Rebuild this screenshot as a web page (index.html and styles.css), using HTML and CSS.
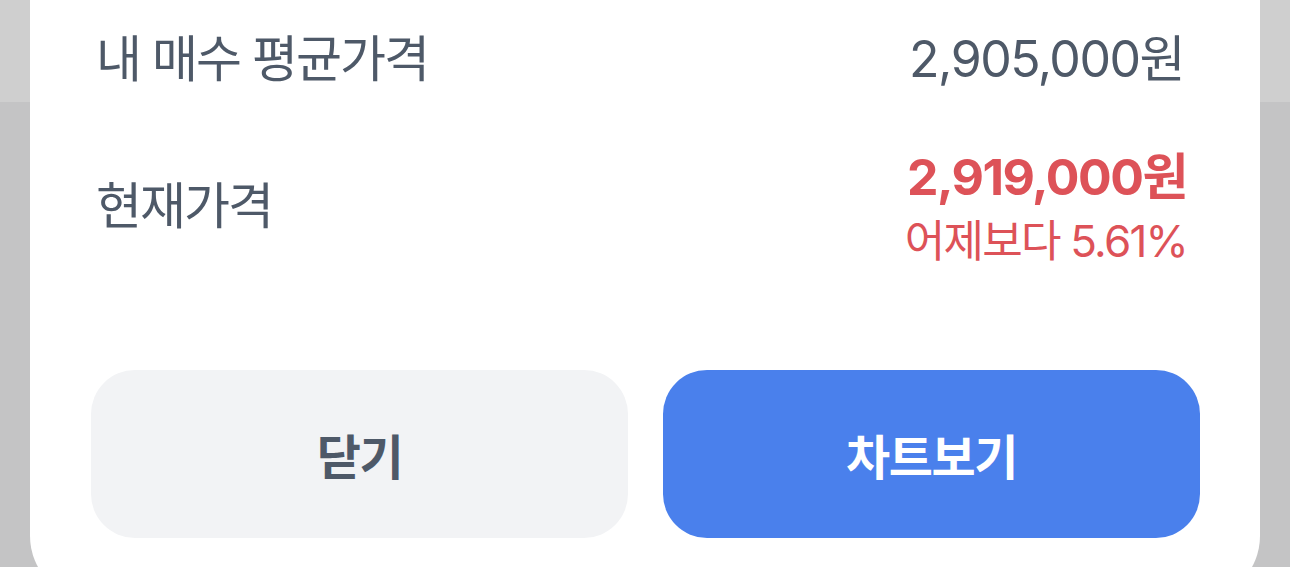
FILE: index.html
```html
<!DOCTYPE html>
<html lang="ko">
<head>
    <meta charset="UTF-8">
    <meta name="viewport" content="width=device-width, initial-scale=1.0">
    <title>보유 종목</title>
    <link rel="stylesheet" href="styles.css">
</head>
<body>
    <div class="sheet">
        <div class="info-row avg-row">
            <span class="info-label">내 매수 평균가격</span>
            <span class="info-value">2,905,000원</span>
        </div>

        <div class="info-row current-row">
            <span class="info-label">현재가격</span>
            <div class="price-box">
                <span class="price-now">2,919,000원</span>
                <span class="price-change">어제보다 5.61%</span>
            </div>
        </div>

        <div class="actions">
            <button class="button close-button">닫기</button>
            <button class="button chart-button">차트보기</button>
        </div>
    </div>
</body>
</html>
```

FILE: styles.css
```css
html,
body {
    height: 100%;
}

body {
    margin: 0;
    overflow: hidden;
    font-family: "Inter", "Noto Sans CJK KR", sans-serif;
    color: #4e5968;
    background: linear-gradient(#cfcfcf 0, #cfcfcf 102px, #c4c4c5 102px);
}

.sheet {
    margin: 0 30px;
    min-height: 600px;
    padding: 0 60px 0 61px;
    background: white;
    border-radius: 0 0 64px 64px;
    box-sizing: border-box;
}

.info-row {
    display: flex;
    justify-content: space-between;
    align-items: center;
}

.avg-row {
    height: 110px;
}

.current-row {
    height: 184px;
}

.info-label {
    margin-left: 5px;
    font-size: 50px;
    letter-spacing: -0.04em;
}

.info-value {
    margin-right: 16px;
    font-size: 50px;
    letter-spacing: -0.03em;
}

.price-box {
    display: flex;
    flex-direction: column;
    align-items: flex-end;
    padding-top: 14px;
    margin-right: 13px;
    color: #dd5258;
}

.price-now {
    font-size: 50px;
    font-weight: 700;
    letter-spacing: -0.03em;
    line-height: 56px;
}

.price-change {
    margin-top: 8px;
    font-size: 44px;
    letter-spacing: -0.04em;
    line-height: 56px;
}

.actions {
    display: flex;
    gap: 35px;
    margin-top: 76px;
}

.button {
    flex: 1;
    height: 168px;
    border: none;
    border-radius: 44px;
    font-family: inherit;
    font-size: 48px;
    font-weight: 600;
    letter-spacing: -0.03em;
    cursor: pointer;
}

.close-button {
    background: #f2f3f5;
    color: #4e5968;
}

.chart-button {
    background: #4a80ec;
    color: white;
}
```
